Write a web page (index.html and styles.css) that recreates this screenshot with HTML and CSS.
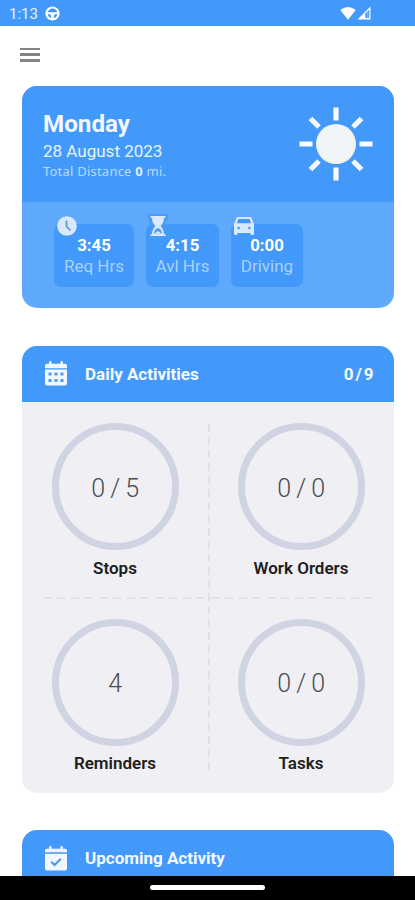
FILE: index.html
```html
<!DOCTYPE html>
<html lang="en">
<head>
<meta charset="utf-8">
<meta name="viewport" content="width=device-width, initial-scale=1">
<title>Daily Activities</title>
<link rel="stylesheet" href="styles.css">
</head>
<body>
<header class="status">
  <span class="time">1:13</span>
  <svg class="wheel" width="15" height="15" viewBox="0 0 15 15"><circle cx="7.5" cy="7.5" r="6" fill="none" stroke="#fff" stroke-width="2.2"/><path d="M2 6.200H13V8.300H9.500L8.500 13H6.500L5.500 8.300H2Z" fill="#fff"/></svg>
  <svg class="signals" width="32" height="15" viewBox="0 0 32 15"><path d="M.2 4Q8 -2 15.800 4L8 13.800Z" fill="#fff"/><path d="M17.500 13.500L30.500 .5V13.500Z" fill="#fff"/><path d="M25.300 7.500L29.300 3.500V12H25.300Z" fill="#4299fa"/><path d="M27.800 6V12" stroke="#b8d9fd" stroke-width=".7"/></svg>
</header>
<nav class="toolbar"><button class="menu" aria-label="Menu"><i></i><i></i><i></i></button></nav>
<main>
  <section class="card summary">
    <div class="day">
      <div>
        <h1>Monday</h1>
        <p class="date">28 August 2023</p>
        <p class="distance">Total Distance <b>0</b> mi.</p>
      </div>
      <svg class="sun" width="74" height="74" viewBox="-37 -37 74 74"><circle r="20" fill="#f1f4f6"/><path d="M0-36.500V-23.500M0 36.500V23.500M-36.500 0H-23.500M36.500 0H23.500M-25.500-25.500L-17-17M25.500-25.500L17-17M-25.500 25.500L-17 17M25.500 25.500L17 17" stroke="#f7faff" stroke-width="5.200"/></svg>
    </div>
    <div class="hours">
      <div class="tile req">
        <svg class="badge" width="20" height="20" viewBox="0 0 20 20"><circle cx="10" cy="10" r="9.800" fill="#d9e8fa"/><path d="M9.500 4.500V10.500L13.500 14.500" fill="none" stroke="#5696df" stroke-width="1.700"/></svg>
        <strong>3:45</strong><span>Req Hrs</span>
      </div>
      <div class="tile avl">
        <svg class="badge glass" width="20" height="24" viewBox="0 0 20 24"><path d="M0 0H20V5L15 13L20 24H0L4 13L0 5Z" fill="#4b9bf4"/><path d="M2.500 2H17.500V3.800H16C15.800 8.500 14.500 10 12.500 12C14.500 14 15.800 16.500 16 20.200H17.500V22H2.500V20.200H4C4.200 16.500 5.500 14 7.500 12C5.500 10 4.200 8.500 4 3.800H2.500Z" fill="#d9e8fa"/><path d="M6 19.500C6.300 17 7.500 14.200 10 14.200S13.700 17 14 19.500Z" fill="#4b9bf4"/><path d="M7 19.500Q10 15 13 19.500Z" fill="#d9e8fa"/></svg>
        <strong>4:15</strong><span>Avl Hrs</span>
      </div>
      <div class="tile drive">
        <svg class="badge car" width="20" height="18" viewBox="0 0 20 18"><path d="M4 0H16Q17.300 0 17.700 1.200L20 7V17Q20 18 19 18H17.500Q16.500 18 16.500 17V16H3.500V17Q3.500 18 2.500 18H1Q0 18 0 17V7L2.300 1.200Q2.700 0 4 0Z" fill="#d9e8fa"/><path d="M4.400 2H15.600L17 6.300H3Z" fill="#4299fa"/><circle cx="4.600" cy="11" r="1.300" fill="#4299fa"/><circle cx="15.400" cy="11" r="1.300" fill="#4299fa"/></svg>
        <strong>0:00</strong><span>Driving</span>
      </div>
    </div>
  </section>

  <section class="card activities">
    <div class="head">
      <svg width="22" height="25" viewBox="0 0 22 25"><path d="M2 2.800H4V1.300Q4 0 5.300 0T6.600 1.300V2.800H15.400V1.300Q15.400 0 16.700 0T18 1.300V2.800H20Q22 2.800 22 5V7.300H0V5Q0 2.800 2 2.800ZM0 8.500H22V22.500Q22 24.500 20 24.500H2Q0 24.500 0 22.500Z" fill="#f2f6fd"/><path d="M3.500 11.500h3v3h-3zM9.500 11.500h3v3h-3zM15.500 11.500h3v3h-3zM3.500 18h3v3h-3zM9.500 18h3v3h-3zM15.500 18h3v3h-3z" fill="#4f9ff7"/></svg>
      <h2>Daily Activities</h2><b class="total">0/9</b>
    </div>
    <div class="grid">
      <div class="cell"><div class="ring">0 / 5</div><h3>Stops</h3></div>
      <div class="cell"><div class="ring">0 / 0</div><h3>Work Orders</h3></div>
      <div class="cell"><div class="ring">4</div><h3>Reminders</h3></div>
      <div class="cell"><div class="ring">0 / 0</div><h3>Tasks</h3></div>
      <div class="rule-h"></div><div class="rule-v"></div>
    </div>
  </section>

  <section class="card upcoming">
    <div class="head">
      <svg width="22" height="25" viewBox="0 0 22 25"><path d="M2 2.800H4V1.300Q4 0 5.300 0T6.600 1.300V2.800H15.400V1.300Q15.400 0 16.700 0T18 1.300V2.800H20Q22 2.800 22 5V6.300H0V5Q0 2.800 2 2.800ZM0 7.800H22V22.500Q22 24.500 20 24.500H2Q0 24.500 0 22.500Z" fill="#f2f6fd"/><path d="M6.200 15.800L9.600 19L15.800 12.800" fill="none" stroke="#4299fa" stroke-width="2"/></svg>
      <h2>Upcoming Activity</h2>
    </div>
  </section>
</main>
<footer class="gesture"><span></span></footer>
</body>
</html>
```

FILE: styles.css
```css
* { box-sizing: border-box; margin: 0; padding: 0; }
body {
  width: 415px; height: 900px; overflow: hidden;
  display: flex; flex-direction: column;
  background: #fff; color: #1d1d20;
  font-family: Roboto, "Liberation Sans", sans-serif;
}
svg { display: block; flex: none; }
.status {
  flex: none; height: 25.5px; display: flex; align-items: center;
  padding: 2px 44px 0 9px; background: #4299fa; color: #e8f3ff;
}
.time { font-size: 15px; line-height: 18px; width: 35.5px; }
.signals { margin-left: auto; margin-right: -.5px; }
.toolbar { flex: none; height: 60px; padding: 22px 20px 0; }
.menu { display: flex; flex-direction: column; gap: 3.5px; width: 20px; border: 0; background: none; }
.menu i { height: 2.4px; width: 20px; background: #858585; }
main { flex: 1; min-height: 0; overflow: hidden; padding: 0 21.5px 0 22.5px; display: flex; flex-direction: column; gap: 37.5px; }
.card { flex: none; border-radius: 15px; overflow: hidden; background: #efeff4; }
main { padding: 0 21px 0 22px; }
.summary { height: 222.500px; background: #5fa9fc; color: #fff; }
.day { height: 116px; background: #4299fa; display: flex; justify-content: space-between; padding: 21px 21px 0; }
h1 { font-size: 24.2px; line-height: 34px; font-weight: 700; color: #f3f8ff; }
.date { font-size: 17px; line-height: 21px; color: #e6f2ff; }
.distance { font: 13px/19px "Noto Sans", sans-serif; letter-spacing: .22px; color: #b9dafe; }
.distance b { color: #dcecff; }
.hours { display: flex; gap: 12px; padding: 22px 0 0 32px; }
.tile { position: relative; height: 63.500px; border-radius: 7px; background: #4299fa; display: flex; flex-direction: column; align-items: center; padding-top: 11.5px; }
.req { width: 80px; }
.avl { width: 73px; }
.drive { width: 72px; }
.tile strong { font-size: 16.8px; line-height: 21px; font-weight: 700; }
.tile span { font-size: 17px; line-height: 21px; color: #a9d0fd; }
.badge { position: absolute; left: 3px; top: -7.500px; }
.glass { left: 2px; top: -10px; }
.car { top: -6.500px; }
.activities { height: 447px; }
.head { height: 56px; background: #4299fa; color: #f5f9ff; display: flex; align-items: center; padding: 0 20px 0 23px; }
.head h2 { margin-left: 18px; font-size: 17px; font-weight: 700; line-height: 24px; }
.total { margin-left: auto; font-size: 17px; letter-spacing: 2px; margin-right: -1.500px; }
.grid { position: relative; height: 391px; display: grid; grid-template-columns: 1fr 1fr; grid-template-rows: 195.500px 195.500px; }
.cell { display: flex; flex-direction: column; align-items: center; padding-top: 21.500px; }
.ring { flex: none; width: 127px; height: 127px; border: 7.5px solid #d0d3e2; border-radius: 50%; display: flex; align-items: center; justify-content: center; padding-top: 3px; font-size: 25px; letter-spacing: -.5px; font-weight: 300; color: #4c4c50; }
.cell h3 { font-size: 17px; line-height: 22px; font-weight: 600; margin-top: 6.5px; }
.rule-h { position: absolute; left: 21px; right: 21px; top: 195.500px; height: 2px; background: repeating-linear-gradient(90deg, #e2e2e6 0 8px, transparent 8px 14px); }
.rule-v { position: absolute; left: 185.5px; top: 22px; height: 347px; width: 2px; background: repeating-linear-gradient(180deg, #e0e0e5 0 8px, transparent 8px 13px); }
.upcoming { height: 120px; }
.gesture { flex: none; height: 24.500px; background: #000; display: flex; justify-content: center; padding-top: 9.500px; }
.gesture span { width: 115px; height: 5px; border-radius: 3px; background: #fff; }
```
